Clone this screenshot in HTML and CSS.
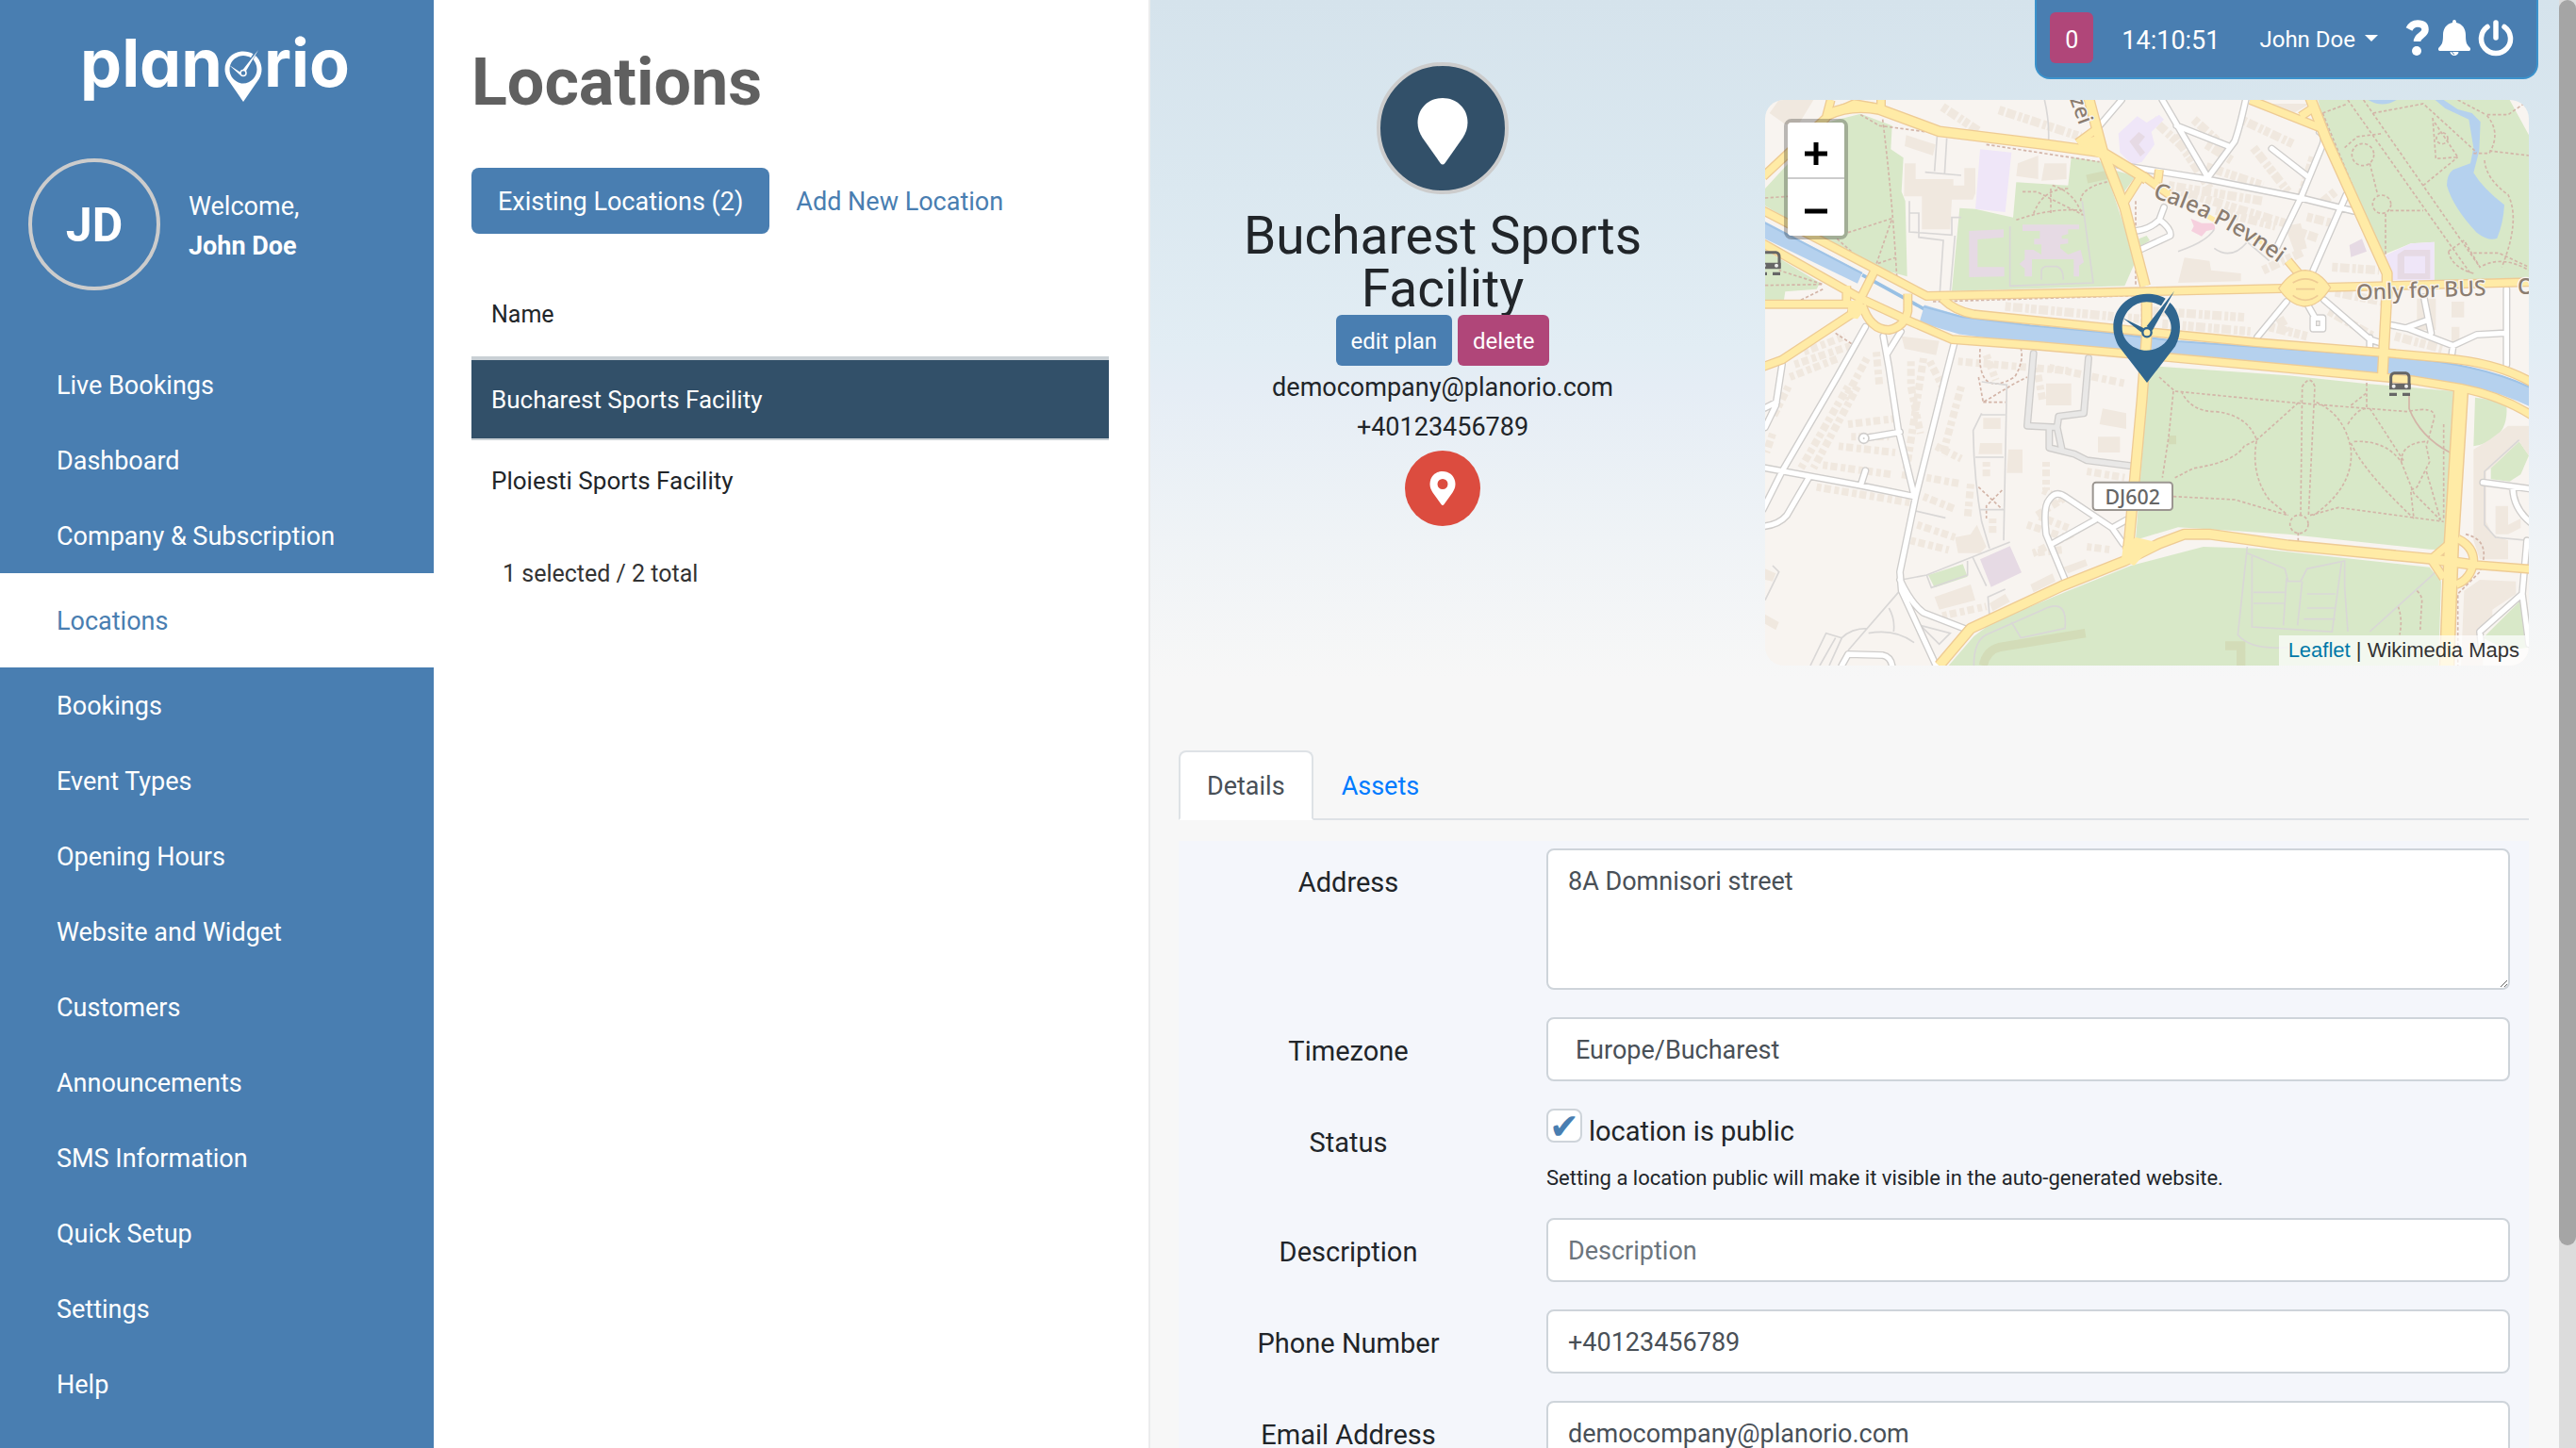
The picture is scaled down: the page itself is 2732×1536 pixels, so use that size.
FILE: index.html
```html
<!DOCTYPE html>
<html lang="en">
<head>
<meta charset="utf-8">
<title>Planorio - Locations</title>
<link rel="stylesheet" href="styles.css">
</head>
<body>
<div class="app">
  <aside class="sidebar">
    <a class="brand" href="#" aria-label="planorio">
      <svg class="brand-logo" viewBox="84 36 290 76">
        <text class="brand-text" x="84" y="92">plan</text>
        <text class="brand-text" x="279" y="92">rio</text>
        <path fill="#fff" fill-rule="evenodd" d="M257 54.500c-11 0-19.500 8.500-19.500 19 0 3.500 1 7 3 10.500l16.500 24 16.500-24c2-3.500 3-7 3-10.500 0-6-3-11.500-6.500-14.500l-2.500 4c2 2.500 4 6 4 10.500 0 8-6.500 15-14.500 15s-14.500-7-14.500-15 6.500-14.500 14.500-14.500c3 0 6 1 8 2.200l2.500-4c-3-1.700-6.500-2.700-10.500-2.700z"/>
        <path fill="#fff" d="M273 53l-13.500 23-3-2zM242 69l12.500 8-1 2.500z"/>
        <circle cx="257" cy="77.500" r="3" fill="#497eb1" stroke="#fff" stroke-width="1.500"/>
      </svg>
    </a>
    <div class="profile">
      <span class="avatar">JD</span>
      <p class="welcome">Welcome,<br><strong>John Doe</strong></p>
    </div>
    <nav class="menu">
      <a href="#">Live Bookings</a>
      <a href="#">Dashboard</a>
      <a href="#">Company &amp; Subscription</a>
      <a href="#" class="active">Locations</a>
      <a href="#">Bookings</a>
      <a href="#">Event Types</a>
      <a href="#">Opening Hours</a>
      <a href="#">Website and Widget</a>
      <a href="#">Customers</a>
      <a href="#">Announcements</a>
      <a href="#">SMS Information</a>
      <a href="#">Quick Setup</a>
      <a href="#">Settings</a>
      <a href="#">Help</a>
    </nav>
  </aside>

  <section class="list">
    <h1>Locations</h1>
    <div class="pills">
      <a href="#" class="pill active">Existing Locations (2)</a>
      <a href="#" class="pill">Add New Location</a>
    </div>
    <table class="locations">
      <thead><tr><th>Name</th></tr></thead>
      <tbody>
        <tr class="selected"><td>Bucharest Sports Facility</td></tr>
        <tr><td>Ploiesti Sports Facility</td></tr>
      </tbody>
    </table>
    <p class="summary">1 selected / 2 total</p>
  </section>

  <main class="detail">
    <header class="toolbar">
      <span class="badge">0</span>
      <time class="clock">14:10:51</time>
      <button type="button" class="user">John Doe <span class="caret"></span></button>
      <div class="tools">
        <button type="button" aria-label="Help"><svg width="28" height="40" viewBox="0 0 28 40"><path d="M5 11Q8 5 14 5q8 0 8 6.500c0 6-8.500 6-8.500 12.500" fill="none" stroke="#fff" stroke-width="7.500"/><circle cx="13" cy="34" r="5" fill="#fff"/></svg></button>
        <button type="button" aria-label="Notifications"><svg width="34" height="40" viewBox="0 0 34 40"><path fill="#fff" d="M17 1c-1.500 0-2 1-2 3C8 5.500 5 11 5 17c0 8-1 10-4 13-2 2-1 4 1 4h30c2 0 3-2 1-4-3-3-4-5-4-13 0-6-3-11.500-10-13 0-2-.5-3-2-3zM12.500 35a4.500 4 0 0 0 9 0z"/><path d="M14.500 35q.5 2 2.500 2.500" fill="none" stroke="#497eb1" stroke-width="1"/></svg></button>
        <button type="button" aria-label="Log out"><svg width="38" height="40" viewBox="0 0 38 40"><g fill="none" stroke="#fff" stroke-width="5.500" stroke-linecap="round"><path d="M10 8.500a15.500 15.500 0 1 0 18 0"/><path d="M19 4v16"/></g></svg></button>
      </div>
    </header>

    <div class="overview">
      <div class="summary-card">
        <span class="location-icon"><svg width="54" height="72" viewBox="0 0 54 72"><path fill="#fff" d="M27 1C12 1 .5 12 .5 27c0 6 2 11 5 16l19 27q2.500 3 5 0l19-27c3-5 5-10 5-16C53.500 12 42 1 27 1z"/></svg></span>
        <h2>Bucharest Sports Facility</h2>
        <div class="actions">
          <button type="button" class="btn">edit plan</button>
          <button type="button" class="btn danger">delete</button>
        </div>
        <p>democompany@planorio.com<br>+40123456789</p>
        <a href="#" class="map-link" aria-label="Open in maps"><svg width="28" height="36" viewBox="0 0 28 36"><path fill="#fff" fill-rule="evenodd" d="M14 0C6 0 .5 6 .5 13.500c0 4 1.500 6.500 3 9L12.500 35q1.500 2 3 0l9-12.500c1.500-2.500 3-5 3-9C27.500 6 22 0 14 0zm0 8a5.500 5.500 0 1 1 0 11 5.500 5.500 0 0 1 0-11z"/></svg></a>
      </div>

      <div class="map">
        <svg class="map-canvas" viewBox="36 48 2430 1800" preserveAspectRatio="xMidYMid slice">
          <defs>
            <g id="bus">
              <path fill="none" stroke="#666" stroke-width="9" d="M5 50V18Q5 8 16 5h36q11 3 11 13v32z"/>
              <path fill="#666" d="M0 38h68v20H0zM0 68h24v10H0zM42 68h24v10H42z"/><circle cx="14" cy="47" r="6" fill="#eee"/><circle cx="54" cy="47" r="6" fill="#eee"/>
            </g>
            <path id="plevnei" d="M1268 358Q1400 402 1475 445Q1600 510 1740 620"/>
            <path id="minor" d="M1300 48L1445 295M1565 48Q1545 140 1530 180L1445 295M1345 130L1510 195M1160 255L1440 300 1740 360 1910 402M1800 150Q1820 160 1810 190L1740 360 1665 515M1648 203L1760 290M1885 350L1780 590M1695 690L1602 803M1765 705L1785 740M1780 742h30v34h-30zM1815 685L1960 810 1990 820M1960 805V838M2030 765L2080 775 2225 830 2300 795 2390 790M2395 650V890M2132 675L2155 790M2080 772L2140 750M2225 830L2220 865M1305 390L1290 430Q1260 460 1215 465M1292 430Q1330 460 1325 480L1235 522M1170 48L1100 130M355 770L265 930 90 1230 30 1350M412 800L430 900 460 1100 510 1305M468 785L425 855M637 825L610 930 515 1310 465 1550 470 1610 580 1848M30 1218L340 1275 510 1310M175 1250L105 1370Q80 1400 30 1405M465 1105L350 1125M340 1275L355 1228M90 890L70 1020 36 1090M72 1010L36 1028M465 1575Q500 1650 540 1680L670 1730M280 1848L300 1812 410 1815Q435 1820 440 1848M990 1575L930 1430Q920 1340 940 1320 960 1290 990 1310L1140 1410 1175 1460M950 1460L1085 1385M1140 1410L1185 1385M2320 1265L2466 1285M2415 1280Q2415 1350 2480 1400M2460 1450L2445 1620 2310 1740 2315 1790M2445 1620L2466 1780"/>
            <path id="service" d="M890 855L870 1085 965 1090 980 1160M1065 870L1050 1045 970 1055 965 1090M940 1095V1155L1020 1175 1060 1195 1195 1212"/>
            <path id="secondary" d="M30 400L390 588 550 672 1240 658 1680 648 2466 628M600 680Q640 720 700 730L1240 785 1600 820 2000 852 2200 870Q2370 885 2480 950M30 505L340 680 480 745 630 810 900 830 1240 860 1800 912 2100 940 2250 965Q2380 990 2480 1055M36 698H310M30 897L90 875 310 730 320 690M345 700Q370 780 430 780 480 770 490 720V665M385 590L340 680M295 640V700M30 292L230 105 245 48M230 100L320 60 405 75M405 48V80M1240 290L1330 355M1700 560L1750 620M1290 270L1285 310M1580 48L1810 140M1740 100L1785 70M1232 290L1175 380M1030 185L1085 145M2240 1445Q2292 1470 2290 1520 2280 1575 2235 1590M2225 1450L2155 1510 2195 1570M2280 1526L2480 1542"/>
            <path id="primary" d="M235 95Q310 60 400 78L590 148 930 190 1110 215 1250 300M1065 40L1110 210 1180 390 1245 640M1250 650V800L1235 1000 1195 1440 1190 1480M590 1848L690 1730 980 1595 1180 1515 1290 1460 1370 1430 1450 1430 1700 1465 2150 1508 2280 1526M1770 40L1820 170 2015 600V650L2000 930"/>
          </defs>
          <rect x="36" y="48" width="2430" height="1800" fill="#f8f4f0"/>
          <!-- parks -->
          <g fill="#d8e8c8">
            <path d="M36 330L110 250 230 120 340 92 440 130 436 205 476 232 470 340 482 370 488 610 380 580 300 530 130 440 36 385z"/>
            <path d="M36 525L210 630 200 650 100 658 96 684H36z"/>
            <path d="M835 310L1000 320 1010 230 1110 245 1215 560 1180 640 630 656 655 392 705 395 825 422z"/>
            <path d="M1140 270L1215 290 1175 345zM1225 490L1250 480 1260 495 1230 515z"/>
            <path d="M1795 48H2405L2466 160V615L2165 622V500L2090 505 2005 540 1830 180z"/>
            <path d="M1270 895L1700 925 1940 950 2225 975 2198 1480 2150 1478 1700 1430 1350 1408 1215 1448 1255 930z"/>
            <path d="M620 1848L700 1755 760 1710 1000 1610 1200 1530 1430 1470 1600 1475 2150 1535 2187 1580 2178 1848z"/>
            <path d="M2295 995Q2350 1000 2395 1020 2400 1090 2360 1120 2330 1145 2290 1150z"/>
            <path d="M2345 1220L2435 1135 2466 1180 2440 1240 2405 1262 2345 1255z"/>
            <path d="M2440 1640L2466 1790 2400 1800 2320 1760zM555 1560L665 1525 680 1565 575 1600z"/>
          </g>
          <!-- building blocks -->
          <g fill="#f0e8df">
            <path d="M480 250h35v50h120v20h35v-55h35v80l-8 20h-67l-5 95h-90V355h-57z"/>
            <path d="M485 160L578 190 570 225 480 195zM80 48H190L140 130 100 125 50 90z"/>
            <path d="M840 250L905 225V300L835 290zM925 250H995V300L915 305z"/>
            <path fill-rule="evenodd" d="M2290 1160L2340 1130 2400 1085H2466V1180L2435 1135 2345 1220 2330 1230V1390L2350 1430 2400 1450V1510H2310L2290 1450z"/>
            <path d="M2260 1610L2310 1575 2425 1580V1620L2350 1670V1700L2320 1730V1848H2250z"/>
            <path d="M2360 1340H2400V1400L2440 1380V1410L2400 1430H2360zM470 800L590 815 580 860 480 840z"/>
            <path d="M640 1440L690 1430 710 1400 740 1470 720 1490 650 1490zM575 1630L690 1590 705 1640 590 1670zM750 1650L800 1620 815 1645 760 1675z"/>
            <path d="M1370 550L1450 560 1455 590 1550 600V625L1350 630zM1690 450L1740 440 1760 520 1720 530z"/>
            <path d="M930 950H1010V1020H930zM1110 1030L1185 1045V1095L1100 1080zM1095 1120H1165V1170H1095zM810 1160H855V1235H805zM730 1060H785V1095H730zM720 1140H790V1175H715z"/>
            <path d="M36 1685L80 1710 70 1735 36 1715zM36 1540L70 1555 60 1580 36 1575zM880 1590L950 1555 960 1580 890 1615zM985 1535L1055 1510 1062 1530 1000 1555z"/>
            <path d="M1640 60H1770L1700 100zM2110 680H2170V780H2110zM2220 690H2260V740H2220zM2220 770H2245V830H2220z"/>
          </g>
          <g fill="none" stroke="#f0e8df">
            <g stroke-width="28" stroke-dasharray="18 7 30 9 12 6">
              <path d="M800 705L1230 745M1270 720L1560 740M1300 760L1580 785M600 70L660 110 720 150M780 80L1040 165"/>
              <path d="M1340 160L1450 330M1400 110L1510 210M1440 260L1620 320M1440 190L1520 240M1550 110L1720 190M1590 200L1700 340M1780 230L1740 360M1850 340L1800 380"/>
              <path d="M1320 320L1620 370M1360 340L1690 440M1470 400L1660 450M1760 420L1840 440M1740 470L1800 490M1620 590L1750 530M1840 580L1990 590M1270 110L1410 240"/>
              <path d="M1850 660L2000 690M1830 720L1970 800M1660 720L1700 790M1640 770L1760 800M2040 800L2190 840"/>
            </g>
            <g stroke-width="24" stroke-dasharray="15 9 22 11">
              <path d="M160 850L290 800M130 890L310 830M115 930L270 870M110 960L60 1060M300 960L150 1220M330 960L190 1220M360 870L290 1000M390 850L400 960"/>
              <path d="M540 870L480 1260M560 880L600 960M300 1080L470 1060M310 1120L430 1120M270 1150L450 1170M220 1210L440 1240M200 1280L500 1330M60 1110L40 1170M660 960L600 1180"/>
              <path d="M500 880L500 960 530 1110M580 1150L660 1190M550 1250L660 1270M540 1310L640 1350M520 1400L640 1440M500 1450L620 1480M690 1270L680 1380"/>
              <path d="M650 880L1000 910M900 900L920 1010M740 860L770 940M940 900L1180 950M920 1290L980 1320 900 1370 1000 1410M870 1400L990 1440 890 1490 980 1480M760 1380V1430M740 1200V1250M930 1200V1290M1060 1230L1180 1250M1060 1470L1140 1480M600 1690L740 1660"/>
            </g>
          </g>
          <g fill="#efe6f8"><path d="M720 205L820 215 800 405 705 395z"/><path d="M2005 545L2090 505 2165 500V622H2025z"/><path d="M1160 155L1220 100 1250 120 1290 95 1305 110 1265 150 1275 190 1235 245 1205 255 1165 215z"/></g>
          <g fill="#e6dae4">
            <path d="M685 465L795 460V485L712 492V580H797V610L685 612zM855 445H1035V460H1000V475L980 480V490H1000V505L975 508V520L1000 540 1040 525 1050 565 1035 575V610H1018V555H885V610H862V585L845 570 862 555V525H890L915 540V508H892V490H910V465H855z"/>
            <path d="M720 1510L815 1468 852 1552 755 1598zM1895 510L1935 490 1950 530 1900 548z"/>
            <path fill-rule="evenodd" d="M2048 540L2070 525H2152V618H2048zM2070 545V600H2136V545zM1195 180L1225 150 1245 165 1225 190 1245 215 1230 228z"/>
          </g>
          <path fill="#f6d0de" d="M1390 425L1425 440 1465 440 1468 460 1440 465 1425 482 1392 465 1400 450z"/>
          <path fill="none" stroke="#d3dcb8" stroke-width="28" d="M730 1848Q740 1800 780 1790L1055 1745M1500 1785H1550V1848M1060 300L1130 285M1320 1130h24"/>
          <!-- water -->
          <g fill="#b5d1ee">
            <path d="M36 435L345 598 330 632 36 490z"/>
            <path d="M1955 48H2045Q2000 75 1955 48zM2168 48H2195L2240 78 2285 90 2312 118 2308 210 2290 280Q2320 330 2388 382 2385 440 2365 488 2340 500 2300 470 2225 390 2205 320 2205 285 2225 270L2280 250 2290 200 2275 110 2200 75z"/>
          </g>
          <g fill="none" stroke="#b5d1ee"><path stroke-width="11" stroke="#98c0e4" d="M345 605L545 715"/><path stroke-width="58" d="M535 728L660 765 880 795 1100 814 1350 845 1800 877 2050 897Q2320 917 2480 997"/><path stroke-width="6" stroke="#9fc3e6" d="M36 440L345 600M540 706L660 738 880 766 1100 786 1350 816 1800 848 2050 868Q2320 888 2480 968"/></g>
          <!-- footpaths -->
          <g fill="none" stroke="#d3b5a8" stroke-width="5" stroke-dasharray="10 7">
            <path d="M340 95L400 130 590 155M410 110Q440 350 455 610M36 360L110 355M300 470L440 425 390 570 450 550M265 490L310 530M36 638L220 635 80 590M150 685L220 650M740 190L1100 245M855 340H900Q980 380 1050 415M835 430Q950 390 1045 400M950 320Q1020 340 1045 415M945 330V410M890 410Q920 330 1000 330M1040 370Q1040 325 1140 305M570 690L1240 670M1215 370V640M1235 660V800M720 840Q710 1000 830 930Q860 880 850 840M260 790L320 830"/>
            <path d="M1810 90L1990 530M1890 48L2280 600M1940 48L2310 580M1970 90Q2080 70 2130 60 2240 160 2300 215M2160 105L2170 235 2240 230 2160 110M2290 218H2340Q2380 150 2330 95H2400L2450 60M2240 48L2330 95M2325 240Q2330 300 2400 350 2440 430 2380 580M2340 210L2466 225M1810 90L1890 60M2025 400H2130M2010 410V540M1960 250L1985 350M2210 530Q2220 580 2290 600M2210 530L2260 495 2310 580Q2380 540 2466 590M2290 535H2370L2466 580M2130 320L2240 230M1880 200L1920 165 2000 155"/>
            <circle cx="1938" cy="222" r="35"/><circle cx="1998" cy="380" r="29"/><circle cx="2190" cy="170" r="18"/>
            <path d="M1290 930L1340 975 1700 1010 2080 1040Q2170 1020 2165 1060L2140 1150 2150 1200 2110 1280 2090 1290 2100 1380M1335 975L1320 1120 1300 1250M1360 975Q1390 1040 1470 1040 1570 1050 1600 1130 1580 1240 1640 1320L1700 1370M1340 1250L1400 1220Q1530 1200 1560 1150L1600 1130 1740 1005M1740 1370L1745 960Q1770 920 1785 960L1765 1370M1790 1010Q1880 1050 1900 1160 1910 1280 1780 1370M1335 1310L1530 1320 1700 1370M1770 1370L1860 1345 2195 1390M1900 1140Q1940 1230 2100 1380M1910 1135Q2010 1130 2060 1200L2100 1300 2185 1385M1960 1030L2070 1200M1890 1080Q1920 1030 1950 1030L1950 940M2060 1200Q2060 1140 2140 1135M2140 1230L2185 1385M1900 1020L1950 980M1732 1425V1455"/>
            <circle cx="1735" cy="1398" r="29"/>
            <path d="M2110 1610Q2130 1630 2125 1650L2120 1740M2050 1660Q2065 1700 2055 1750M2195 1080V1380M2265 1430Q2350 1450 2310 1550L2240 1620V1848M715 930L730 1010 830 950 870 930M730 1010H800M715 1280L790 1350M790 1290L740 1340V1380"/>
          </g>
          <path fill="none" stroke="#d3b5a8" stroke-width="5" d="M2085 990V1030Q2120 1120 2215 1170"/>
          <g fill="none" stroke="#d9d7d6" stroke-width="5">
            <path d="M583 165L575 275M614 170L607 285M545 278L660 288M495 370V468L630 478V422H660M495 408H525V485L603 495 592 660M640 480L625 655M925 48Q940 110 938 175M815 450V640L1080 630 1045 370M915 620V590Q920 575 940 578H965Q985 585 985 620M1350 530Q1440 500 1465 460M1465 520Q1520 560 1570 500L1640 560"/>
            <path d="M725 945L805 955 795 1450M725 1050H800M705 1185H795M725 1045L698 1100Q700 1250 725 1390L750 1475M720 1352H795M510 1355L610 1378M470 1575L550 1560 815 1455M550 1560L565 1600 680 1560 680 1515M695 1500L740 1595M750 1690L745 1630 800 1605M460 1615L300 1800M430 1665Q450 1700 445 1740M365 1745Q450 1730 510 1775M180 1848L230 1745 280 1760 240 1848M260 1760L210 1848M280 1760Q310 1730 360 1730M530 1720L590 1780 625 1745zM60 1530L80 1550 36 1640"/>
            <path d="M1570 1470L1540 1750Q1580 1800 1700 1790M1570 1490L1690 1540 1700 1580H1740L1760 1540 1880 1515V1600L1890 1740M1585 1500V1725L1840 1740 1870 1520M1695 1570L1685 1720M1745 1580L1730 1720M1590 1615H1690M1590 1650H1690M1760 1620H1850M1760 1665H1850M1750 1700H1850M2170 1550L1960 1740M700 1848Q700 1770 740 1750L920 1670Q1000 1630 990 1730L850 1760 820 1710M2435 1130L2325 1230V1400L2360 1440 2466 1450"/>
          </g>
          <!-- streets: casing, then surface -->
          <g fill="none" stroke-linejoin="round" stroke-linecap="round">
            <g stroke="#cfcdcb" stroke-width="24"><use href="#service"/><use href="#minor"/></g>
            <use href="#service" stroke="#e9e8e7" stroke-width="16"/>
            <use href="#minor" stroke="#fff" stroke-width="16"/>
            <circle cx="350" cy="1125" r="16" fill="#fff" stroke="#cfcdcb" stroke-width="5"/>
            <circle cx="350" cy="1125" r="3" fill="#cfcdcb"/>
          </g>
          <g fill="none" stroke-linejoin="round">
            <g stroke="#eecb94">
              <use href="#secondary" stroke-width="30"/>
              <use href="#primary" stroke-width="36"/>
              <path stroke-width="50" d="M2250 970L2220 1450 2205 1850"/>
            </g>
            <g stroke="#ffeba6">
              <use href="#secondary" stroke-width="22"/>
              <use href="#primary" stroke-width="28"/>
              <path stroke-width="41" d="M2250 970L2220 1450 2205 1850"/>
            </g>
            <path fill="#ffeba6" stroke="#eecb94" stroke-width="4" d="M1670 648Q1710 590 1755 590 1800 592 1835 645 1800 705 1750 705 1705 700 1670 648z"/>
            <path stroke="#eecb94" stroke-width="5" d="M1715 630Q1755 605 1795 630M1725 650H1785M1715 670Q1755 700 1795 670"/>
            <path fill="#ffeba6" d="M300 690L345 680 350 720 330 745 300 740zM1030 180L1100 160 1120 240 1060 215zM1175 1470L1215 1440 1280 1455 1210 1530 1170 1510z"/>
            <path stroke="#ffeba6" stroke-width="16" d="M1420 405L1475 435M1590 480L1640 520"/>
          </g>
          <g class="map-labels">
            <text class="street"><textPath href="#plevnei">Calea Plevnei</textPath></text>
            <text transform="translate(1918 684) rotate(-2)">Only for BUS</text>
            <text transform="translate(2430 666)">Only for BUS</text>
            <text text-anchor="end" transform="translate(1036 130) rotate(70)">zei</text>
          </g>
          <rect x="1079" y="1265" width="253" height="88" rx="10" fill="#fff" stroke="#9b9691" stroke-width="6"/>
          <text class="road-ref" x="1205" y="1335" text-anchor="middle">DJ602</text>
          <use href="#bus" x="18" y="528"/>
          <use href="#bus" x="2022" y="912"/>
          <!-- facility marker -->
          <path fill="#30668f" fill-rule="evenodd" d="M1251 665C1190 665 1144 712 1144 770c0 24 7 42 17 62l90 116 90-116c10-20 15-38 15-62 0-30-12-60-32-77l-18 30c13 15 22 30 22 50 0 40-36 72-78 72s-78-32-78-72c0-46 36-82 78-82 17 0 32 4 46 12l14-23c-17-10-38-15-59-15z"/>
          <path fill="#30668f" d="M1338 656L1268 782 1250 768zM1174 742L1240 774 1234 788z"/>
          <circle cx="1251" cy="788" r="14" fill="#ffeba6" stroke="#30668f" stroke-width="7"/>
        </svg>
        <div class="zoom">
          <button type="button" aria-label="Zoom in"><svg width="26" height="26" viewBox="0 0 26 26"><path d="M13 1v24M1 13h24" stroke="#000" stroke-width="5"/></svg></button>
          <button type="button" aria-label="Zoom out"><svg width="26" height="26" viewBox="0 0 26 26"><path d="M1 13h24" stroke="#000" stroke-width="5"/></svg></button>
        </div>
        <div class="attribution"><a href="#">Leaflet</a> | Wikimedia Maps</div>
      </div>
    </div>

    <nav class="tabs">
      <a href="#" class="tab active">Details</a>
      <a href="#" class="tab">Assets</a>
    </nav>

    <form class="form">
      <div class="row"><label for="address">Address</label><textarea id="address">8A Domnisori street</textarea></div>
      <div class="row"><label for="timezone">Timezone</label><select id="timezone"><option>Europe/Bucharest</option></select></div>
      <div class="row"><span class="label">Status</span>
        <div class="status">
          <div class="check"><input type="checkbox" id="public" checked><label for="public">location is public</label></div>
          <small>Setting a location public will make it visible in the auto-generated website.</small>
        </div>
      </div>
      <div class="row"><label for="description">Description</label><input type="text" id="description" placeholder="Description"></div>
      <div class="row"><label for="phone">Phone Number</label><input type="text" id="phone" value="+40123456789"></div>
      <div class="row"><label for="email">Email Address</label><input type="text" id="email" value="democompany@planorio.com"></div>
    </form>
  </main>
  <div class="scroll-track" aria-hidden="true"><div class="scroll-thumb"></div></div>
</div>
</body>
</html>
```

FILE: styles.css
```css
* { box-sizing: border-box; }

body {
  margin: 0;
  font-family: Roboto, "Liberation Sans", sans-serif;
  font-size: 27px;
  line-height: 42px;
  color: #212529;
}

a { text-decoration: none; }
p, h1, h2 { margin: 0; }
svg { display: block; }
button, input, select, textarea { font: inherit; color: inherit; margin: 0; }
button { cursor: pointer; }

.app {
  display: grid;
  grid-template-columns: 460fr 760fr 1494fr 18px;
  height: 100vh;
  overflow: hidden;
}

/* Sidebar */
.sidebar { background: #497eb1; color: #fff; }
.brand { display: flex; justify-content: center; padding-top: 36px; }
.brand-logo { width: 290px; height: 76px; overflow: visible; }
.brand-text {
  font-family: Inter, sans-serif;
  font-size: 70px;
  font-weight: 700;
  font-feature-settings: "cv11";
  fill: #fff;
}
.profile { display: flex; align-items: center; gap: 30px; padding: 56px 30px 60px; }
.avatar {
  display: flex;
  align-items: center;
  justify-content: center;
  width: 140px;
  height: 140px;
  padding-top: 2px;
  border: 4px solid #ccc;
  border-radius: 50%;
  font-size: 50px;
  font-weight: 700;
}
.welcome { padding-top: 4px; }
.menu a {
  display: flex;
  align-items: center;
  height: 80px;
  padding: 2px 0 0 60px;
  color: #fff;
}
.menu .active { height: 100px; background: #fff; color: #497eb1; }

/* Location list */
.list { padding: 52px 42px 0 40px; border-right: 2px solid #ebeced; }
h1 { font-size: 70px; line-height: 70px; font-weight: 700; color: #606060; }
.pills { display: flex; margin-top: 56px; }
.pill { padding: 15px 28px 13px; border-radius: 8px; color: #497eb1; }
.pill.active { background: #497eb1; color: #fff; }
.locations { width: 100%; margin-top: 42px; border-collapse: collapse; font-size: 25px; }
.locations th, .locations td { height: 86px; padding: 0 21px; text-align: left; font-weight: 400; }
.locations td { font-size: 26px; }
.locations th { height: 90px; border-bottom: 4px solid #c9d0d5; }
.locations .selected { background: #325069; color: #fff; }
.locations .selected td { border-bottom: 2px solid #c9d0d5; }
.summary { margin-top: 36px; padding-left: 33px; font-size: 25px; color: #333; }

/* Detail panel */
.detail {
  position: relative;
  padding: 66px 32px 0 30px;
  overflow-y: auto;
  scrollbar-width: none;
  background: linear-gradient(#d5e3ec, #dbe8f0 200px, #e2edf4 370px, #e5edf5 410px, #eff3f6 570px, #f7f7f7 720px);
}
.toolbar {
  position: absolute;
  top: 0;
  right: 22px;
  display: flex;
  align-items: center;
  height: 84px;
  padding: 0 24px 2px 14px;
  border: solid #3b92cc;
  border-width: 0 2px 2px;
  border-radius: 0 0 16px 16px;
  background: #497eb1;
  color: #fff;
}
.badge {
  width: 46px;
  padding: 9px 0 3px;
  border-radius: 6px;
  background: #b04679;
  text-align: center;
  font-size: 25px;
}
.clock { margin-left: 30px; padding-top: 6px; }
.user {
  display: flex;
  align-items: center;
  gap: 10px;
  margin-left: 42px;
  padding: 4px 0 0;
  border: 0;
  background: none;
  font-size: 24px;
}
.caret { border: 7px solid transparent; border-top-color: #fff; border-bottom-width: 0; margin-bottom: 4px; }
.tools { display: flex; gap: 8px; margin-left: 28px; }
.tools button { padding: 0; border: 0; background: none; }

.overview { display: grid; grid-template-columns: 560fr 810fr; gap: 62px; }
.summary-card { display: flex; flex-direction: column; align-items: center; text-align: center; }
.location-icon {
  display: flex;
  align-items: center;
  justify-content: center;
  width: 140px;
  height: 140px;
  padding-top: 6px;
  border: 4px solid #ccc;
  border-radius: 50%;
  background: #325069;
}
h2 { margin-top: 16px; font-size: 55px; line-height: 56px; font-weight: 400; }
.actions { display: flex; gap: 6px; position: relative; }
.btn {
  height: 54px;
  padding: 2px 16px 0;
  border: 0;
  border-radius: 6px;
  background: #497eb1;
  color: #fff;
  font-size: 24px;
}
.btn.danger { background: #b04679; }
.summary-card p { margin: 2px 0 4px; }
.map-link {
  display: flex;
  align-items: center;
  justify-content: center;
  width: 80px;
  height: 80px;
  border-radius: 50%;
  background: #dc4c3f;
}

/* Map */
.map {
  position: relative;
  margin-top: 40px;
  aspect-ratio: 27 / 20;
  border-radius: 20px;
  overflow: hidden;
}
.map-canvas { width: 100%; height: 100%; }
.map-labels text {
  font-family: "Noto Sans", sans-serif;
  font-size: 68px;
  font-weight: 500;
  fill: #8b7d70;
  stroke: #f8f4f0;
  stroke-width: 8px;
  paint-order: stroke;
}
.map-labels .street { font-size: 72px; }
.road-ref { font-family: "Noto Sans", sans-serif; font-size: 64px; font-weight: 500; fill: #666; }
.zoom {
  position: absolute;
  top: 20px;
  left: 20px;
  border: 4px solid rgba(0, 0, 0, 0.25);
  border-radius: 8px;
  background-clip: padding-box;
}
.zoom button {
  display: flex;
  align-items: center;
  justify-content: center;
  width: 60px;
  height: 60px;
  padding: 8px 0 0;
  border: 0;
  background: #fff;
}
.zoom button:first-child { border-bottom: 2px solid #ccc; border-radius: 4px 4px 0 0; }
.zoom button:last-child { border-radius: 0 0 4px 4px; }
.attribution {
  position: absolute;
  right: 0;
  bottom: 0;
  padding: 0 10px;
  background: rgba(255, 255, 255, 0.7);
  color: #333;
  font-family: "Liberation Sans", Arial, sans-serif;
  font-size: 22px;
  line-height: 32px;
}
.attribution a { color: #0078a8; }

/* Tabs and form */
.tabs { display: flex; margin-top: 90px; border-bottom: 2px solid #dee2e6; }
.tab {
  margin-bottom: -2px;
  padding: 15px 28px 13px;
  border: 2px solid transparent;
  border-radius: 8px 8px 0 0;
  color: #007bff;
}
.tab.active { border-color: #dee2e6 #dee2e6 #fff; background: #fff; color: #495057; }

.form {
  display: grid;
  gap: 29px;
  margin-top: 22px;
  padding: 8px 20px 30px 0;
  background: #f4f6fb;
}
.row { display: grid; grid-template-columns: 360fr 1022fr; gap: 30px; align-items: start; }
.row > label, .row > .label { padding-top: 15px; text-align: center; font-size: 29px; }
.row > input, .row > select, .row > textarea {
  width: 100%;
  height: 68px;
  padding: 12px 21px 10px;
  border: 2px solid #ced4da;
  border-radius: 8px;
  background: #fff;
  color: #495057;
  appearance: none;
  outline: 0;
}
.row > textarea { display: block; height: 150px; }
.row > select { padding-left: 29px; }
input::placeholder { color: #6c757d; opacity: 1; }
.status { height: 87px; }
.check { display: flex; gap: 7px; }
.check input {
  width: 38px;
  height: 36px;
  border: 2px solid #ced4da;
  border-radius: 8px;
  background: #fff;
  appearance: none;
}
.check input:checked::before {
  content: "✔";
  display: block;
  font: 38px/34px "DejaVu Sans", sans-serif;
  text-align: center;
  color: #497eb1;
}
.check label { padding-top: 3px; font-size: 29px; }
small { display: block; margin-top: 13px; font-size: 22px; line-height: 32px; }

/* Scroll position indicator */
.scroll-track { background: #dcdcdc; }
.scroll-thumb { height: 86%; border-radius: 9px; background: #a5a5a5; }
```
